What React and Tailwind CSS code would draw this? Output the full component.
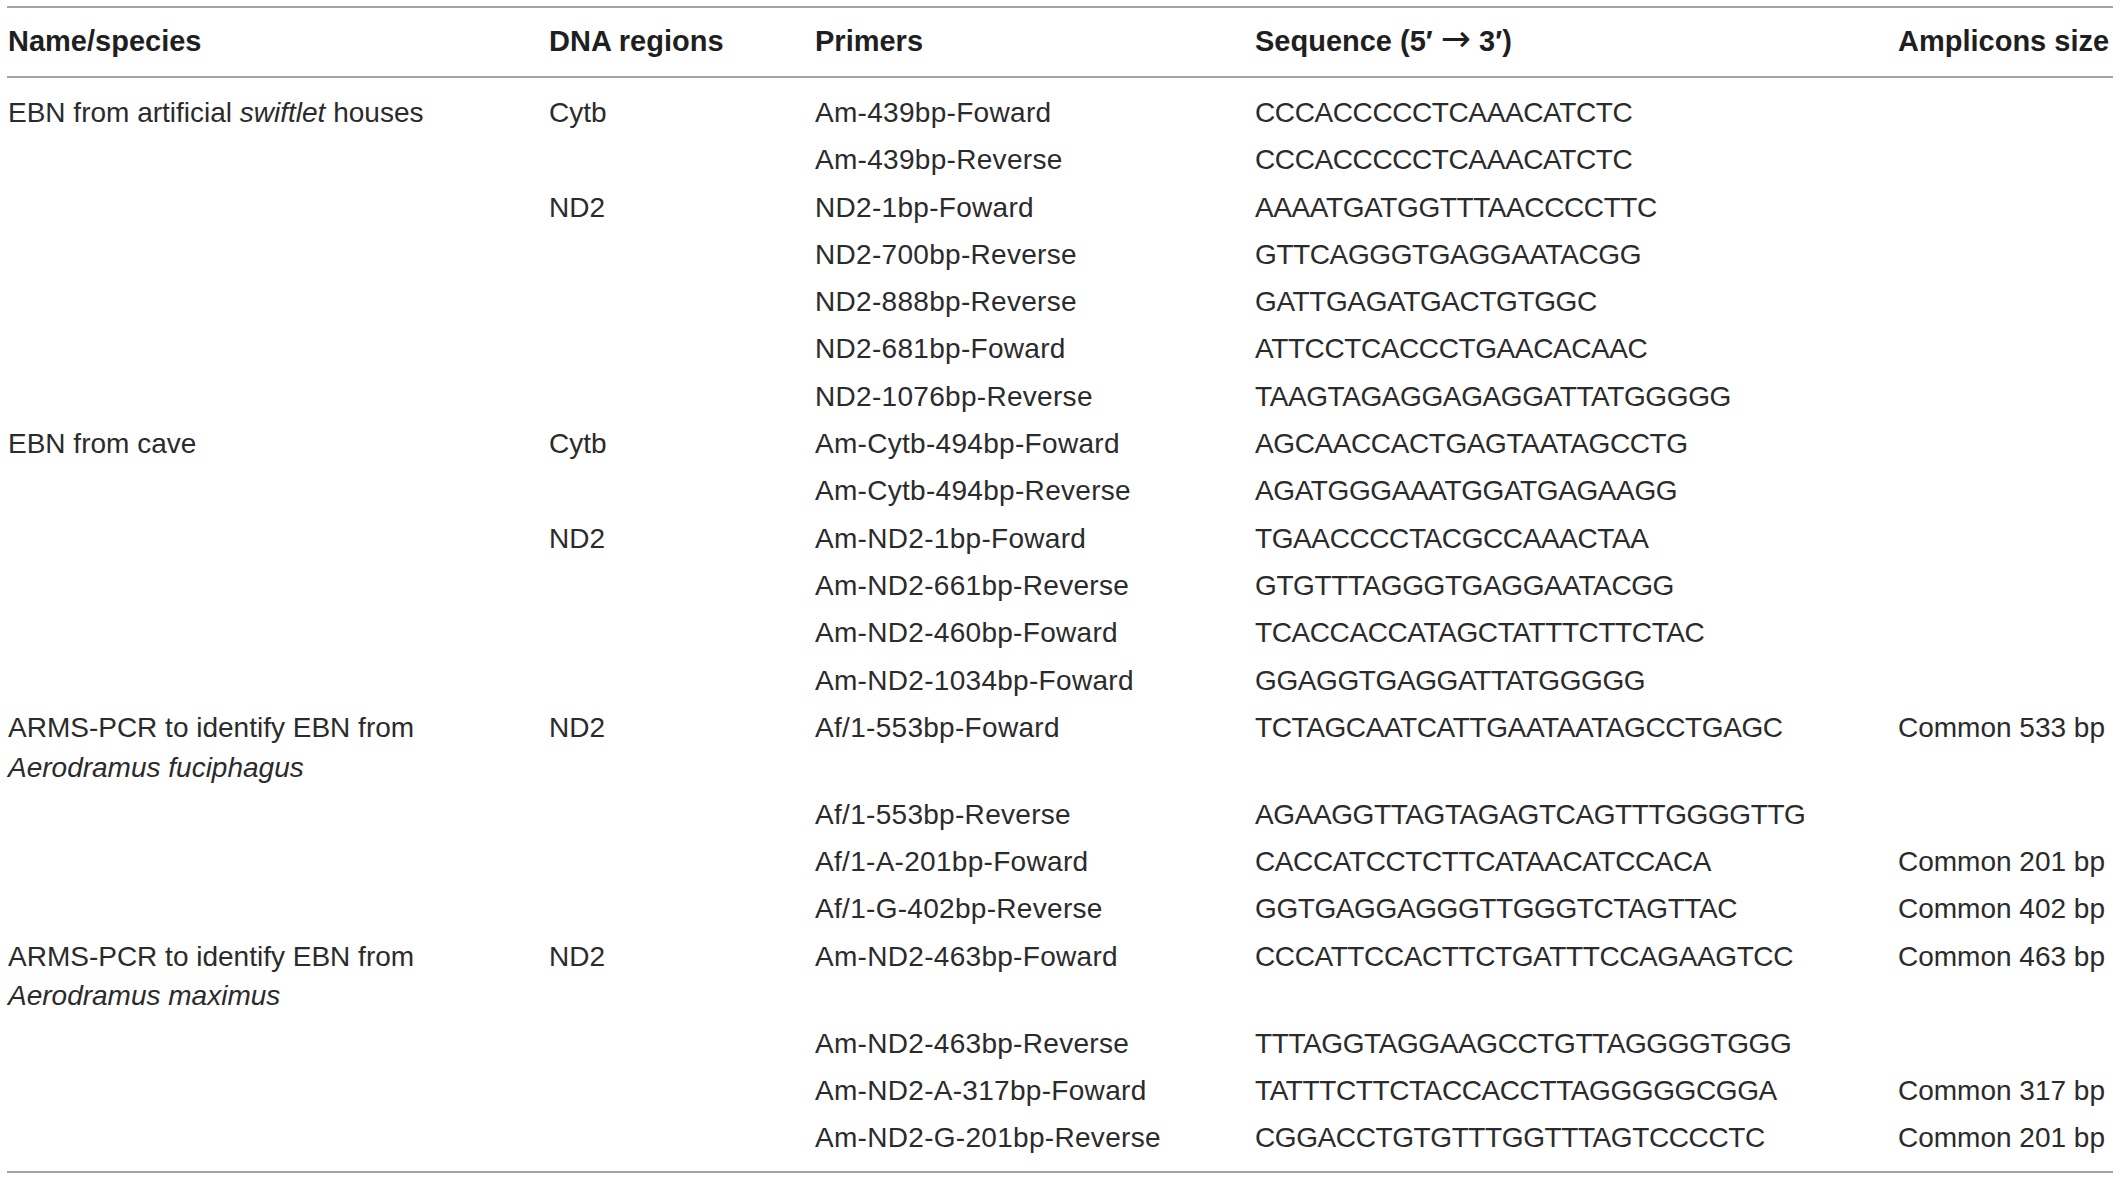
import React from "react";

const groups = [
  {
    name: <>EBN from artificial <i>swiftlet</i> houses</>,
    rows: [
      { dna: "Cytb", p: "Am-439bp-Foward", s: "CCCACCCCCTCAAACATCTC", a: "" },
      { dna: "", p: "Am-439bp-Reverse", s: "CCCACCCCCTCAAACATCTC", a: "" },
      { dna: "ND2", p: "ND2-1bp-Foward", s: "AAAATGATGGTTTAACCCCTTC", a: "" },
      { dna: "", p: "ND2-700bp-Reverse", s: "GTTCAGGGTGAGGAATACGG", a: "" },
      { dna: "", p: "ND2-888bp-Reverse", s: "GATTGAGATGACTGTGGC", a: "" },
      { dna: "", p: "ND2-681bp-Foward", s: "ATTCCTCACCCTGAACACAAC", a: "" },
      { dna: "", p: "ND2-1076bp-Reverse", s: "TAAGTAGAGGAGAGGATTATGGGGG", a: "" },
    ],
  },
  {
    name: <>EBN from cave</>,
    rows: [
      { dna: "Cytb", p: "Am-Cytb-494bp-Foward", s: "AGCAACCACTGAGTAATAGCCTG", a: "" },
      { dna: "", p: "Am-Cytb-494bp-Reverse", s: "AGATGGGAAATGGATGAGAAGG", a: "" },
      { dna: "ND2", p: "Am-ND2-1bp-Foward", s: "TGAACCCCTACGCCAAACTAA", a: "" },
      { dna: "", p: "Am-ND2-661bp-Reverse", s: "GTGTTTAGGGTGAGGAATACGG", a: "" },
      { dna: "", p: "Am-ND2-460bp-Foward", s: "TCACCACCATAGCTATTTCTTCTAC", a: "" },
      { dna: "", p: "Am-ND2-1034bp-Foward", s: "GGAGGTGAGGATTATGGGGG", a: "" },
    ],
  },
  {
    name: <>ARMS-PCR to identify EBN from<br /><i>Aerodramus fuciphagus</i></>,
    rows: [
      { dna: "ND2", p: "Af/1-553bp-Foward", s: "TCTAGCAATCATTGAATAATAGCCTGAGC", a: "Common 533 bp" },
      { dna: "", p: "Af/1-553bp-Reverse", s: "AGAAGGTTAGTAGAGTCAGTTTGGGGTTG", a: "" },
      { dna: "", p: "Af/1-A-201bp-Foward", s: "CACCATCCTCTTCATAACATCCACA", a: "Common 201 bp" },
      { dna: "", p: "Af/1-G-402bp-Reverse", s: "GGTGAGGAGGGTTGGGTCTAGTTAC", a: "Common 402 bp" },
    ],
  },
  {
    name: <>ARMS-PCR to identify EBN from<br /><i>Aerodramus maximus</i></>,
    rows: [
      { dna: "ND2", p: "Am-ND2-463bp-Foward", s: "CCCATTCCACTTCTGATTTCCAGAAGTCC", a: "Common 463 bp" },
      { dna: "", p: "Am-ND2-463bp-Reverse", s: "TTTAGGTAGGAAGCCTGTTAGGGGTGGG", a: "" },
      { dna: "", p: "Am-ND2-A-317bp-Foward", s: "TATTTCTTCTACCACCTTAGGGGGCGGA", a: "Common 317 bp" },
      { dna: "", p: "Am-ND2-G-201bp-Reverse", s: "CGGACCTGTGTTTGGTTTAGTCCCCTC", a: "Common 201 bp" },
    ],
  },
];

const cols = "grid grid-cols-[542px_266px_440px_643px_1fr]";

export default function App() {
  return (
    <div
      className="w-[2120px] h-[1179px] bg-white px-[7px] pt-[6px] text-[#2b2b2b]"
      style={{ fontFamily: '"Liberation Sans", Arial, sans-serif' }}
    >
      <div className="border-t-2 border-b-2 border-[#a3a3a3]">
        <div className={`${cols} border-b-2 border-[#a3a3a3] pt-[13px] pb-[15px] text-[29px] leading-[40px] font-bold text-[#1f1f1f]`}>
          <div className="pl-[1px]">Name/species</div>
          <div>DNA regions</div>
          <div>Primers</div>
          <div className="whitespace-nowrap">
            Sequence (5′{" "}
            <span className="font-normal text-[36px] leading-[0]" style={{ fontFamily: '"DejaVu Sans", sans-serif' }}>→</span>{" "}
            3′)
          </div>
          <div className="whitespace-nowrap">Amplicons size</div>
        </div>
        <div className="pt-[11.2px] pb-[9.2px] text-[28px] leading-[39.7px]">
          {groups.map((g, gi) =>
            g.rows.map((r, ri) => (
              <div key={gi + "-" + ri} className={`${cols} py-[3.8px]`}>
                <div className="pl-[1px]">{ri === 0 ? g.name : ""}</div>
                <div>{r.dna}</div>
                <div className="whitespace-nowrap tracking-[0.3px]">{r.p}</div>
                <div className="whitespace-nowrap tracking-[-0.4px]">{r.s}</div>
                <div className="whitespace-nowrap">{r.a}</div>
              </div>
            ))
          )}
        </div>
      </div>
    </div>
  );
}
